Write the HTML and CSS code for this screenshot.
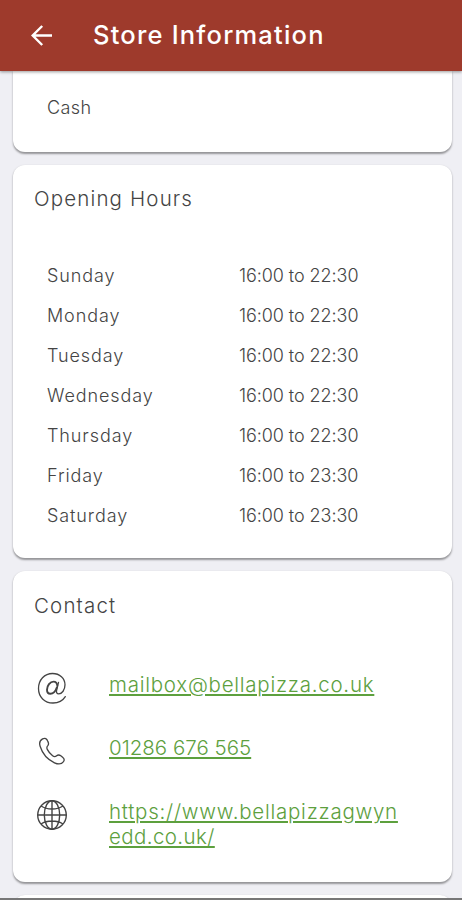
FILE: index.html
```
<!DOCTYPE html>
<html lang="en">
<head>
<meta charset="utf-8">
<title>Store Information</title>
<link rel="stylesheet" href="styles.css">
</head>
<body>
<header class="bar">
  <svg class="back" viewBox="0 0 24 24" width="24" height="24"><path d="M22 12.500H3M12.200 3 2.700 12.500l9.500 9.500" fill="none" stroke="currentColor" stroke-width="2.400"/></svg>
  <h1 class="bar-title">Store Information</h1>
</header>
<main class="cards">
  <section class="card payment"><p class="method">Cash</p></section>
  <section class="card hours">
    <h2 class="card-title">Opening Hours</h2>
    <dl class="times">
      <dt>Sunday</dt><dd>16:00 to 22:30</dd>
      <dt>Monday</dt><dd>16:00 to 22:30</dd>
      <dt>Tuesday</dt><dd>16:00 to 22:30</dd>
      <dt>Wednesday</dt><dd>16:00 to 22:30</dd>
      <dt>Thursday</dt><dd>16:00 to 22:30</dd>
      <dt>Friday</dt><dd>16:00 to 23:30</dd>
      <dt>Saturday</dt><dd>16:00 to 23:30</dd>
    </dl>
  </section>
  <section class="card contact">
    <h2 class="card-title contact-title">Contact</h2>
    <div class="row">
      <svg class="icon" viewBox="0 0 32 32" width="32" height="32"><g fill="none" stroke="currentColor" stroke-linecap="round"><path d="M29.300 24.600C26.800 28.600 22.200 31 17 31 8.600 31 2.500 25 2.500 16.500S8.500 1.500 16.500 1.500c7.200 0 12.500 4.700 12.500 11.300 0 5.200-3 9-6.200 9-2 0-2.700-1.300-2.200-3.400l1.900-8.100" stroke-width="1.300"/><path d="M21.300 13.500c-.3-2.500-1.700-3.900-3.700-3.900-3.500 0-6.600 4-6.600 8.200 0 2.500 1.300 4 3.300 4 2.800 0 5.300-2.800 6.500-6.300" stroke-width="1.900"/></g></svg>
      <a class="link mail" href="mailto:mailbox@bellapizza.co.uk">mailbox@bellapizza.co.uk</a>
    </div>
    <div class="row">
      <svg class="icon" viewBox="0 0 32 32" width="32" height="32"><path d="M6.600 3.900C4 5.300 3 8 4.200 11.500c2.200 7 7.600 13.200 14.300 16.300 3.800 1.700 7.300 1.300 9.100-1.300 1-1.500.6-3-1-4.300l-1.800-1.400c-1.600-1.200-2.900-1.100-4.200 0-1.300 1.200-2.500 1.200-4 0-2.400-1.900-4.200-4.100-5.300-6.400-.8-1.600-.5-2.700.5-3.800 1-1.200 1-2.400.1-4C10.900 3.500 9 2.600 6.600 3.900Z" fill="none" stroke="currentColor" stroke-width="1.300"/></svg>
      <a class="link phone" href="tel:01286676565">01286 676 565</a>
    </div>
    <div class="row site-row">
      <svg class="icon" viewBox="0 0 32 32" width="32" height="32"><g fill="none" stroke="currentColor" stroke-width="1.400"><circle cx="16" cy="16" r="14.300"/><ellipse cx="16" cy="16" rx="7.700" ry="14.300"/><path d="M16 1.700v28.600M1.700 16h28.600M5 7c6 4 16 4 22 0M5 25c6-4 16-4 22 0"/></g></svg>
      <a class="link site" href="https://www.bellapizzagwynedd.co.uk/">https://www.bellapizzagwyn<br><span class="site-end">edd.co.uk/</span></a>
    </div>
  </section>
  <section class="card next"></section>
</main>
</body>
</html>
```
FILE: styles.css
```
* { box-sizing: border-box; }
body {
  margin: 0;
  height: 900px;
  overflow: hidden;
  display: flex;
  flex-direction: column;
  background: #efeff4;
  border-bottom: 2px solid #777;
  color: #444;
  font-family: Inter, "Open Sans", sans-serif;
  font-size: 18px;
  font-weight: 300;
}
h1, h2, p, dl, dd { margin: 0; font-weight: inherit; }
.bar {
  flex: none;
  height: 71px;
  display: flex;
  align-items: center;
  padding: 0 0 2px 30px;
  background: #9e3a2c;
  color: #fff;
  box-shadow: 0 1px 3px rgba(0, 0, 0, .4);
  z-index: 1;
}
.back { margin-right: 39px; }
.bar-title { font-size: 25.500px; font-weight: 500; letter-spacing: 1.200px; line-height: 32px; }
.cards {
  flex: 1;
  min-height: 0;
  display: flex;
  flex-direction: column;
  gap: 13px;
  padding: 0 10px 0 13px;
}
.card {
  flex: none;
  background: #fff;
  border-radius: 12px;
  box-shadow: 0 1.500px 2px rgba(0, 0, 0, .38);
}
.payment { height: 81px; padding: 25px 34px; border-radius: 0 0 12px 12px; }
.method { line-height: 24px; letter-spacing: .4px; }
.hours { height: 393px; padding: 20px 21px 0; }
.card-title { font-size: 20.500px; line-height: 28px; letter-spacing: 1.150px; }
.times {
  display: grid;
  grid-template-columns: 192px 1fr;
  grid-auto-rows: 40px;
  align-items: center;
  padding: 42px 0 0 13px;
  letter-spacing: .9px;
}
.times dd { letter-spacing: -.07px; }
.contact { height: 311px; padding: 21px 21px 0; }
.contact-title { margin-bottom: 52px; }
.row { display: flex; align-items: flex-start; height: 63px; }
.icon { flex: none; margin: 0 41px 0 2px; }
.link {
  color: #5da03e;
  font-size: 20.500px;
  line-height: 25px;
  letter-spacing: .75px;
  text-decoration-thickness: 1.500px;
  text-underline-offset: 2px;
}
.phone { letter-spacing: 0; }
.site-row { padding-top: 1px; }
.site-end { letter-spacing: .4px; }
.next { height: 40px; }
```
